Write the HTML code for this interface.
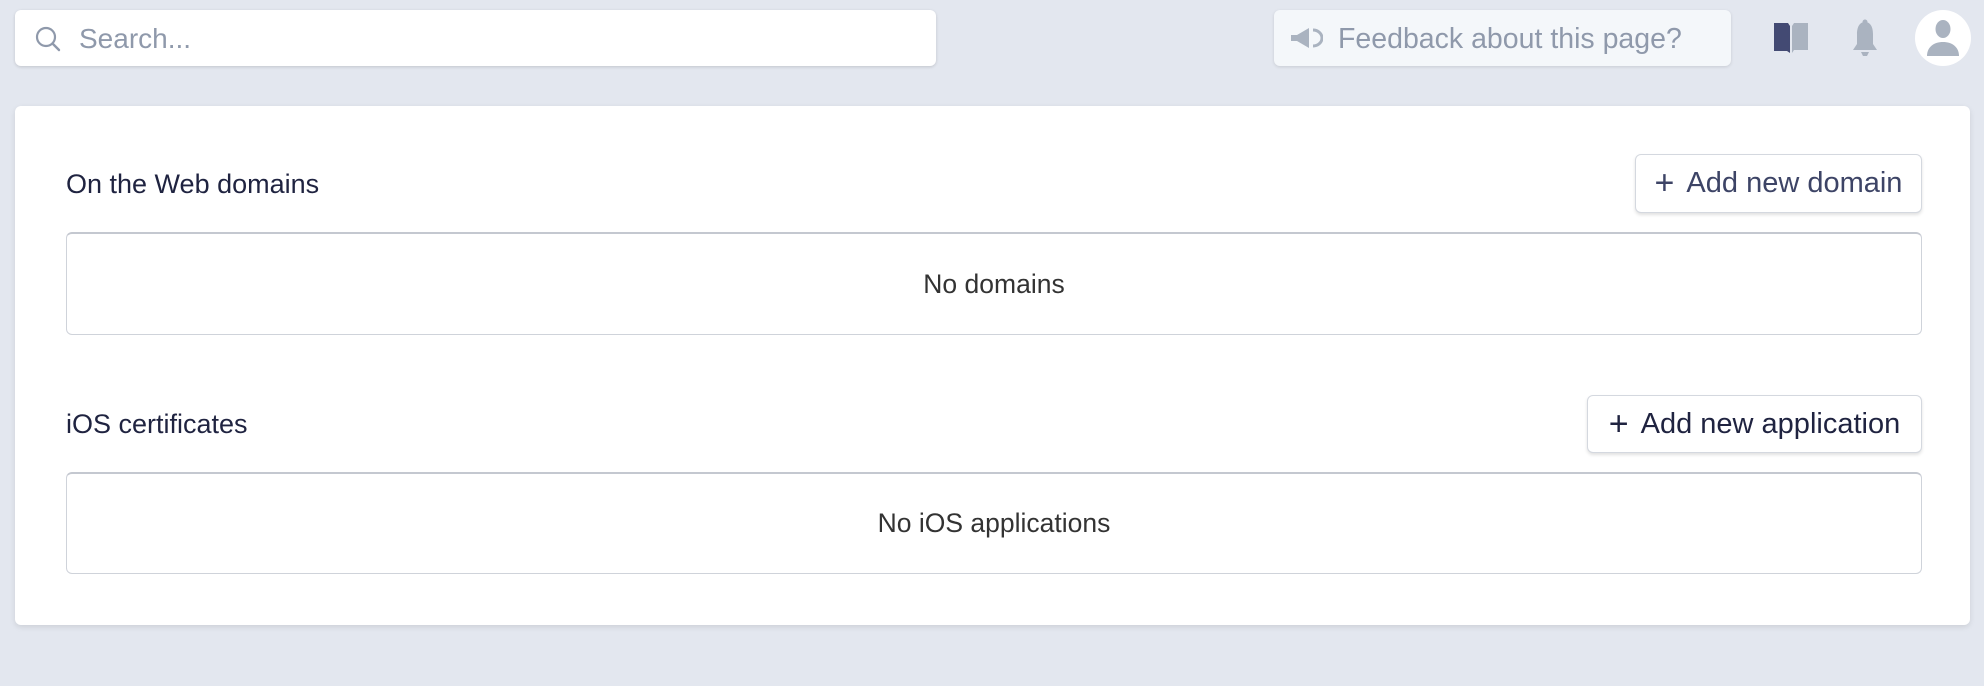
<!DOCTYPE html>
<html><head><style>
body{margin:0;width:1984px;height:686px;background:#e3e7ef;font-family:"Liberation Sans",sans-serif;position:relative;overflow:hidden}
.abs{position:absolute}
.search{left:15px;top:10px;width:921px;height:56px;background:#fff;border-radius:6px;box-shadow:0 1px 3px rgba(0,0,0,.15)}
.search span{position:absolute;left:64px;top:13px;font-size:28px;color:#8f99ab}
.fb{left:1274px;top:10px;width:457px;height:56px;background:#f4f7fa;border-radius:6px;box-shadow:0 1px 3px rgba(0,0,0,.12)}
.fb span{position:absolute;left:64px;top:13px;font-size:28.5px;color:#8f99ab}
.card{left:15px;top:106px;width:1955px;height:519px;background:#fff;border-radius:6px;box-shadow:0 2px 6px rgba(0,0,0,.1)}
.h{font-size:27px;color:#1f2340}
.btn{background:#fff;border:1px solid #d4d8df;border-radius:6px;box-shadow:0 2px 3px rgba(0,0,0,.12);font-size:29px;color:#3d4466;box-sizing:border-box;display:flex;align-items:center;justify-content:center;gap:12px}
.box{border:1px solid #cfd3da;border-top:2px solid #c4c8d0;border-radius:6px;box-sizing:border-box;display:flex;align-items:center;justify-content:center;font-size:26.5px;color:#333}
</style></head><body>
<div class="abs search">
<svg class="abs" style="left:19px;top:15px" width="28" height="28" viewBox="0 0 28 28"><circle cx="12" cy="12" r="9" fill="none" stroke="#8f99ab" stroke-width="2.2"/><path d="M18.5 18.5L25 25" stroke="#8f99ab" stroke-width="2.4" stroke-linecap="round"/></svg>
<span>Search...</span></div>
<div class="abs fb">
<svg class="abs" style="left:15px;top:16px" width="34" height="24" viewBox="0 0 34 24"><path d="M2 9h6l12-7v20L8 15H2z" fill="#aab3c0"/><path d="M24 4a9 8 0 0 1 0 16" fill="none" stroke="#aab3c0" stroke-width="3"/></svg>
<span>Feedback about this page?</span></div>
<svg class="abs" style="left:1773px;top:22px" width="36" height="32" viewBox="0 0 36 32"><path d="M1 1h14l2 3v27l-3-2H1z" fill="#434a73"/><path d="M19 4l2-3h14v27H21l-2 3z" fill="#aab3c0"/></svg>
<svg class="abs" style="left:1850px;top:18px" width="30" height="40" viewBox="0 0 30 40"><circle cx="15" cy="4" r="2.5" fill="#aab3c0"/><path d="M15 4c-6 0-8 6-8 12v10l-4 6h24l-4-6V16c0-6-2-12-8-12z" fill="#aab3c0"/><path d="M11 34h8l-2 4h-4z" fill="#aab3c0"/></svg>
<div class="abs" style="left:1915px;top:10px;width:56px;height:56px;border-radius:50%;background:#fff"></div>
<svg class="abs" style="left:1925px;top:18px" width="36" height="40" viewBox="0 0 36 40"><ellipse cx="18" cy="11" rx="7.5" ry="9" fill="#aab3c0"/><path d="M2 38c0-9 7-14 16-14s16 5 16 14z" fill="#aab3c0"/></svg>
<div class="abs card"></div>
<div class="abs h" style="left:66px;top:169px">On the Web domains</div>
<div class="abs btn" style="left:1635px;top:154px;width:287px;height:59px"><span style="font-size:34px;font-weight:300">+</span>Add new domain</div>
<div class="abs box" style="left:66px;top:232px;width:1856px;height:103px">No domains</div>
<div class="abs h" style="left:66px;top:409px">iOS certificates</div>
<div class="abs btn" style="left:1587px;top:395px;width:335px;height:58px;color:#1f2340"><span style="font-size:34px;font-weight:300">+</span>Add new application</div>
<div class="abs box" style="left:66px;top:472px;width:1856px;height:102px">No iOS applications</div>
</body></html>
